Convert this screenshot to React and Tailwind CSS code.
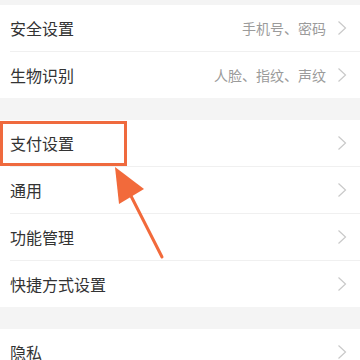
import React from "react";

function Chevron() {
  return (
    <svg width="10" height="16" viewBox="0 0 10 16" className="shrink-0">
      <path d="M1.5 1.5 L8.5 8 L1.5 14.5" fill="none" stroke="#c9c9c9" strokeWidth="1.2" />
    </svg>
  );
}

function Row({ title, sub }) {
  return (
    <div className="h-[46px] bg-white flex items-center pl-[10px] pr-[13px]">
      <span className="text-[16px] text-[#333333] flex-1">{title}</span>
      {sub && <span className="text-[14px] text-[#9b9b9b] mr-[11px]">{sub}</span>}
      <Chevron />
    </div>
  );
}

function Divider() {
  return (
    <div className="h-px bg-white">
      <div className="h-px ml-[10px] bg-[#f0f0f0]" />
    </div>
  );
}

export default function App() {
  return (
    <div
      className="relative w-[360px] h-[360px] overflow-hidden bg-[#f4f4f4]"
      style={{ fontFamily: '"Noto Sans CJK SC", "Noto Sans", sans-serif' }}
    >
      <div className="h-[5px]" />
      <Row title="安全设置" sub="手机号、密码" />
      <Divider />
      <Row title="生物识别" sub="人脸、指纹、声纹" />
      <div className="h-[22px]" />
      <Row title="支付设置" />
      <Divider />
      <Row title="通用" />
      <Divider />
      <Row title="功能管理" />
      <Divider />
      <Row title="快捷方式设置" />
      <div className="h-[22px]" />
      <Row title="隐私" />

      <div className="absolute left-0 top-[121px] w-[127px] h-[45px] border-[3px] border-[#ef6a3e]" />
      <svg className="absolute left-0 top-0" width="360" height="360" viewBox="0 0 360 360">
        <polygon points="115,167 119,204 144,189" fill="#f26a3b" />
        <line x1="130" y1="194" x2="162" y2="257" stroke="#f26a3b" strokeWidth="3" strokeLinecap="round" />
      </svg>
    </div>
  );
}
